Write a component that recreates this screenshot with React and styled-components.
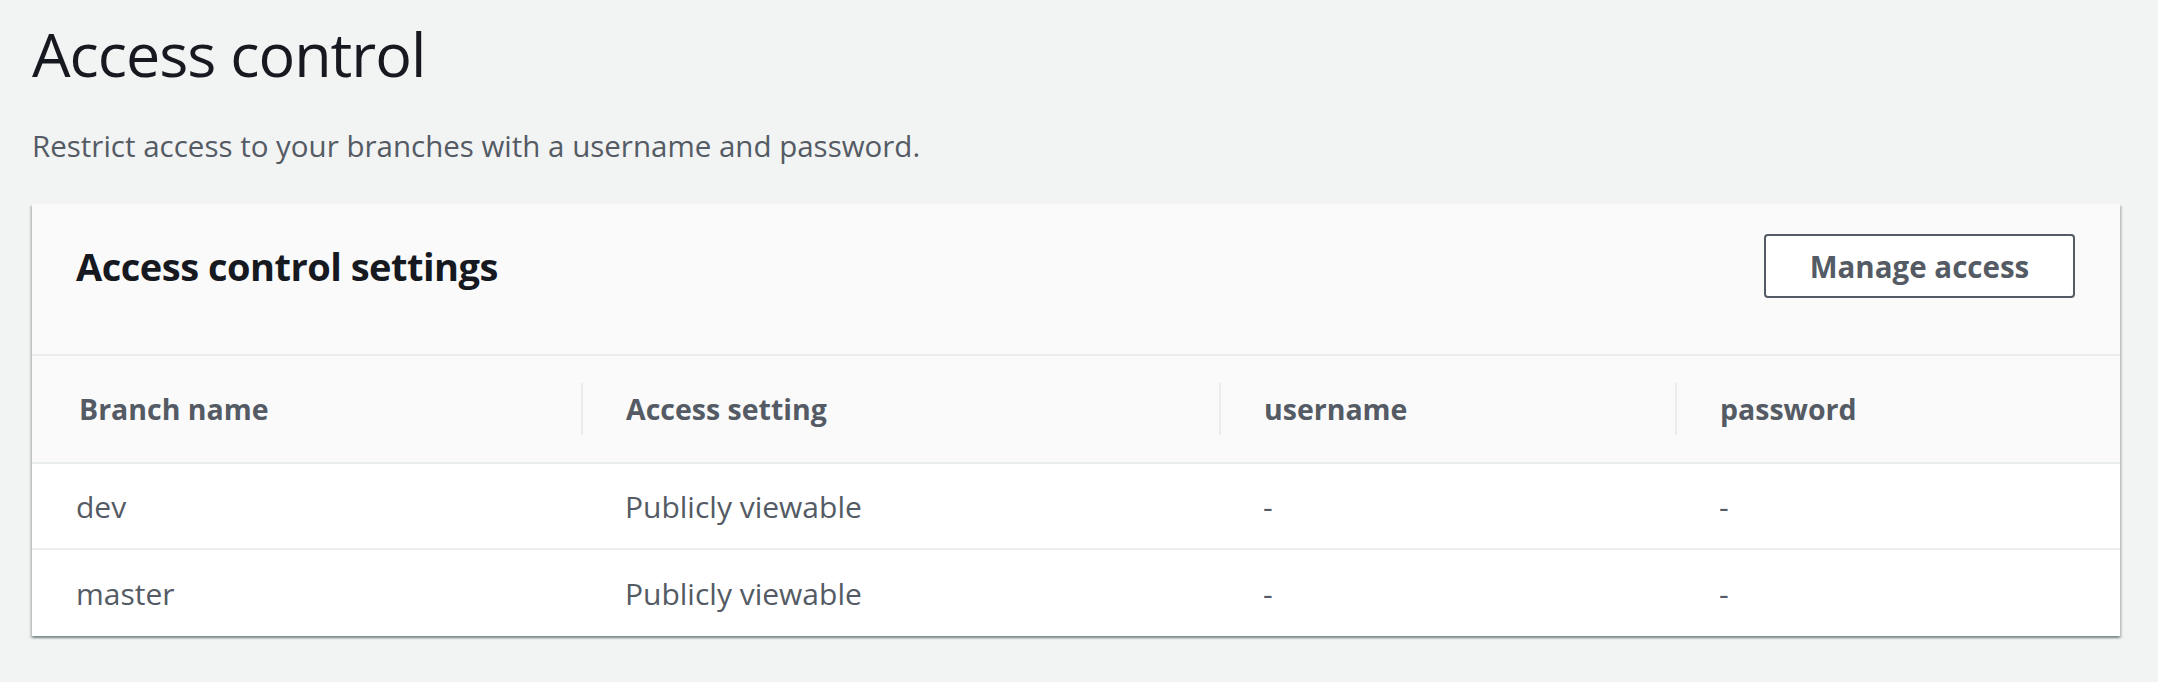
import React from 'react';
import styled, { createGlobalStyle } from 'styled-components';

const Global = createGlobalStyle`
  html, body {
    margin: 0;
    padding: 0;
    background: #f2f3f3;
  }
  body {
    font-family: "Open Sans", "Noto Sans", sans-serif;
    color: #16191f;
  }
`;

const columns = [
  { key: 'branch', label: 'Branch name', width: 549 },
  { key: 'access', label: 'Access setting', width: 638 },
  { key: 'username', label: 'username', width: 456 },
  { key: 'password', label: 'password', width: 445 },
];

const rows = [
  { branch: 'dev', access: 'Publicly viewable', username: '-', password: '-' },
  { branch: 'master', access: 'Publicly viewable', username: '-', password: '-' },
];

function AccessControl() {
  return (
    <Page>
      <Global />
      <Title>Access control</Title>
      <Subtitle>Restrict access to your branches with a username and password.</Subtitle>
      <Card>
        <CardHeader>
          <CardTitle>Access control settings</CardTitle>
          <Button>Manage access</Button>
        </CardHeader>
        <Table>
          <HeadRow>
            {columns.map((c, i) => (
              <HeadCell key={c.key} $width={c.width} $divider={i > 0}>
                {c.label}
              </HeadCell>
            ))}
          </HeadRow>
          {rows.map((r) => (
            <BodyRow key={r.branch}>
              {columns.map((c) => (
                <Cell key={c.key} $width={c.width}>{r[c.key]}</Cell>
              ))}
            </BodyRow>
          ))}
        </Table>
      </Card>
    </Page>
  );
}

export default function App() {
  return <AccessControl />;
}

const Page = styled.div`
  padding: 16px 38px 40px 32px;
`;

const Title = styled.h1`
  margin: 0;
  font-size: 61px;
  font-weight: 400;
  line-height: 76px;
  letter-spacing: -1px;
  color: #16191f;
`;

const Subtitle = styled.p`
  margin: 34px 0 0;
  font-size: 29.5px;
  line-height: 40px;
  color: #545b64;
`;

const Card = styled.div`
  margin-top: 38px;
  background: #fff;
  box-shadow: 0 2px 2px 0 rgba(0, 28, 36, 0.3), 2px 2px 2px 0 rgba(0, 28, 36, 0.15),
    -2px 2px 2px 0 rgba(0, 28, 36, 0.15);
`;

const CardHeader = styled.div`
  display: flex;
  align-items: center;
  justify-content: space-between;
  box-sizing: border-box;
  height: 152px;
  padding: 31px 45px 57px 44px;
  background: #fafafa;
  border-bottom: 2px solid #eaeded;
`;

const CardTitle = styled.h2`
  margin: 0;
  font-size: 38px;
  font-weight: 700;
  letter-spacing: -0.5px;
  color: #16191f;
`;

const Button = styled.button`
  box-sizing: border-box;
  width: 311px;
  height: 64px;
  background: #fff;
  border: 2px solid #545b64;
  border-radius: 4px;
  font-family: inherit;
  font-size: 29.5px;
  font-weight: 700;
  color: #545b64;
  cursor: pointer;
`;

const Table = styled.div`
  display: flex;
  flex-direction: column;
`;

const HeadRow = styled.div`
  display: flex;
  height: 106px;
  align-items: center;
  background: #fafafa;
  border-bottom: 2px solid #eaeded;
`;

const HeadCell = styled.div`
  box-sizing: border-box;
  width: ${(p) => p.$width}px;
  height: 52px;
  display: flex;
  align-items: center;
  padding-left: ${(p) => (p.$divider ? 43 : 47)}px;
  border-left: ${(p) => (p.$divider ? '2px solid #eaeded' : 'none')};
  font-size: 28.5px;
  font-weight: 700;
  color: #545b64;
`;

const BodyRow = styled.div`
  display: flex;
  height: 84px;
  align-items: center;
  border-bottom: 2px solid #eaeded;

  &:last-child {
    border-bottom: none;
    height: 86px;
  }
`;

const Cell = styled.div`
  box-sizing: border-box;
  width: ${(p) => p.$width}px;
  padding-left: 44px;
  font-size: 30px;
  color: #545b64;
`;
